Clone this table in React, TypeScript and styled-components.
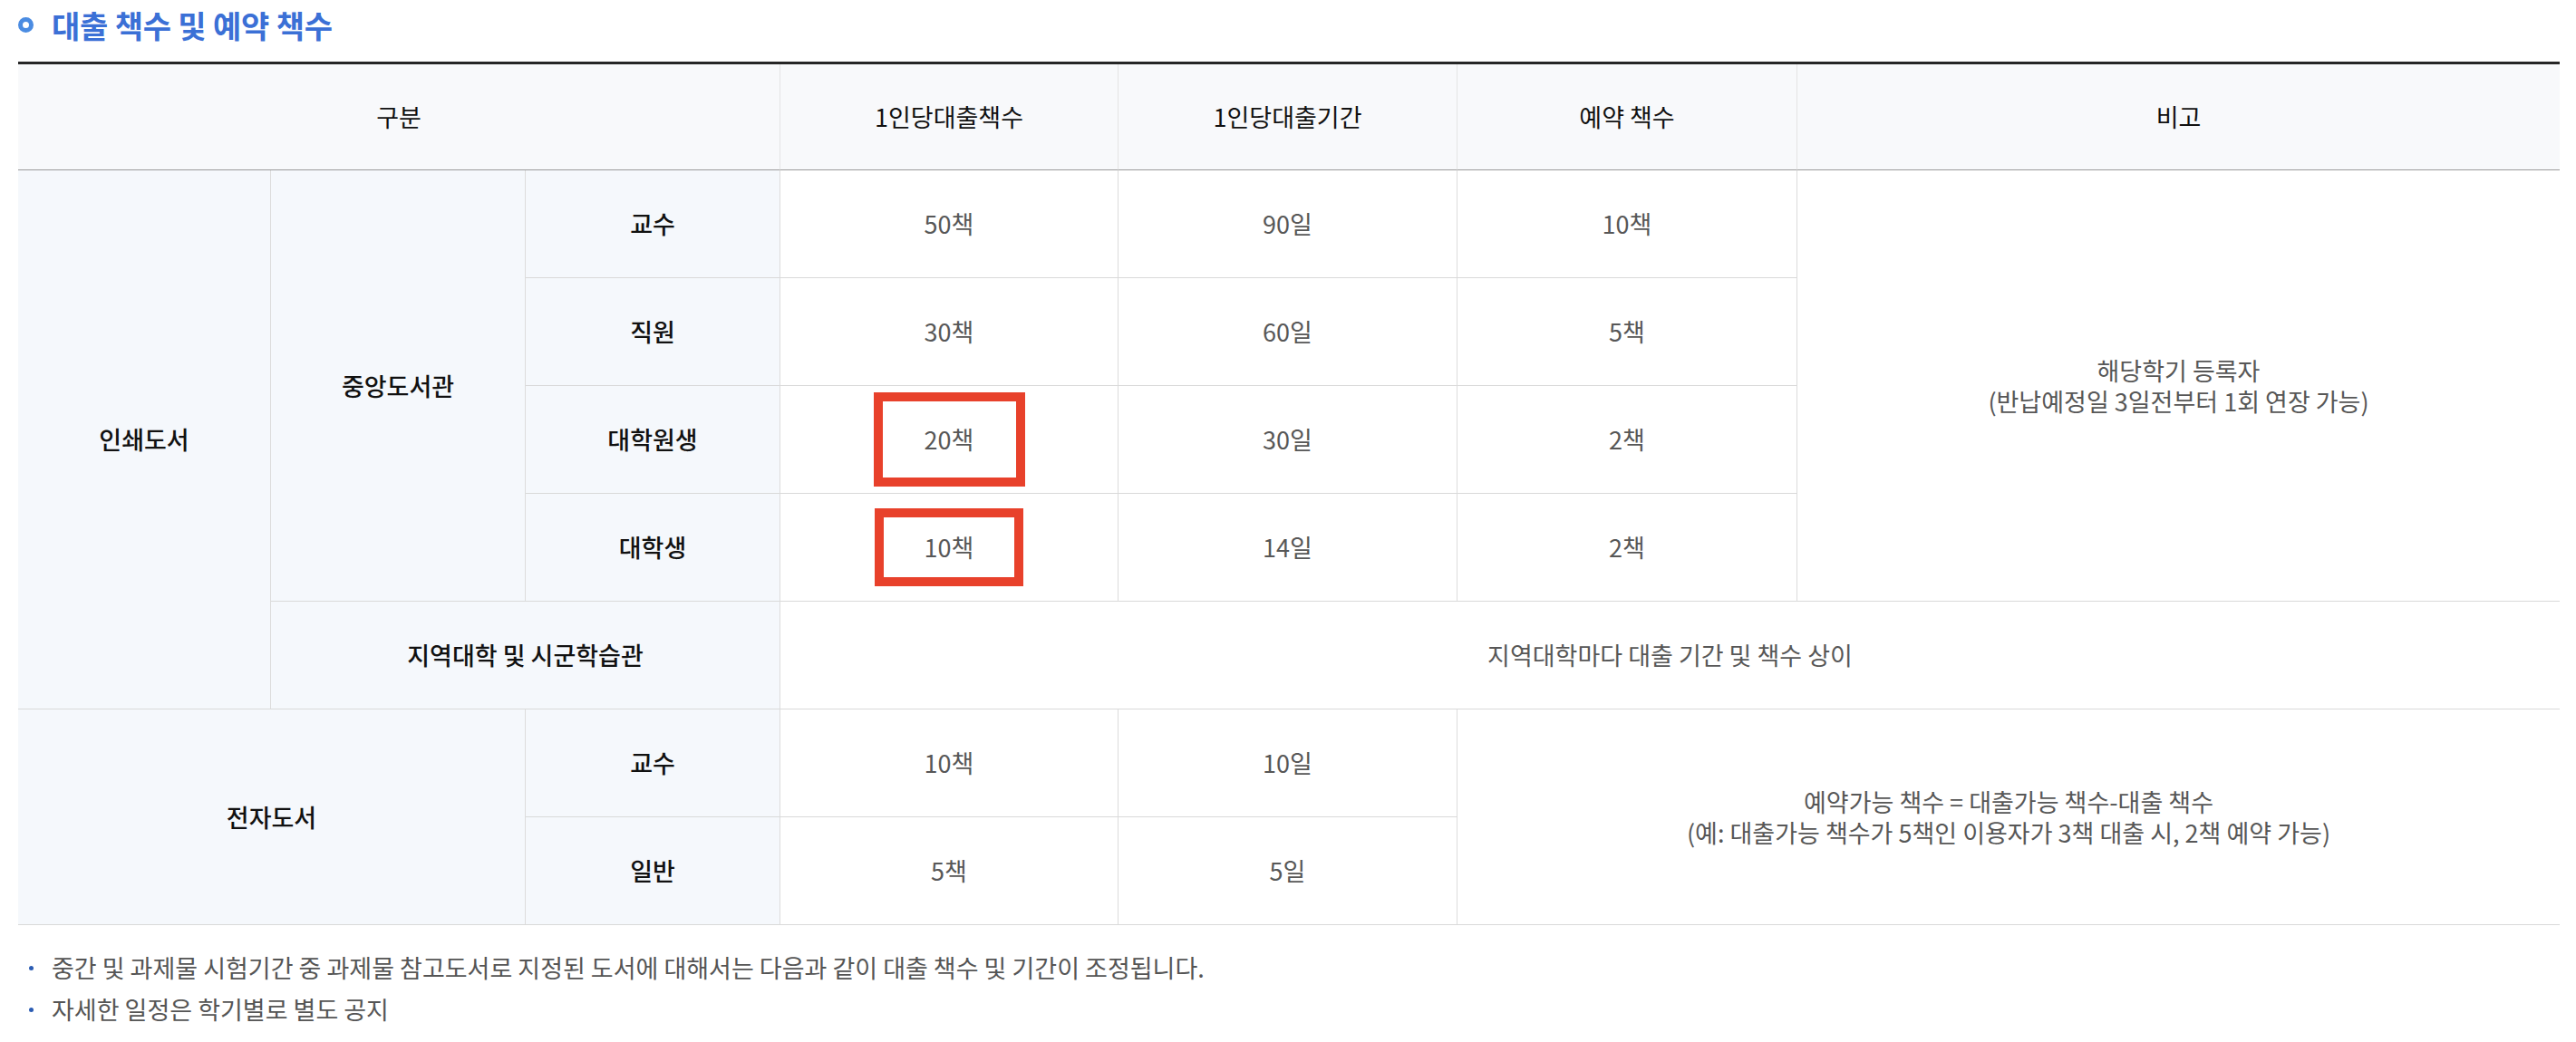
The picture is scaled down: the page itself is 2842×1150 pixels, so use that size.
import styled, { createGlobalStyle } from "styled-components";

const GlobalStyle = createGlobalStyle`
  body {
    margin: 0;
    background: #fff;
    font-family: "Noto Sans CJK KR", "Noto Sans", sans-serif;
  }
`

const Page = styled.div`
  padding: 0 18px 0 20px;
`

const Title = styled.h2`
  margin: 0;
  height: 55px;

  display: flex;
  flex-direction: row;
  align-items: center;
  gap: 20px;

  color: #3b70d6;
  font-size: 34px;
  font-weight: 700;
  letter-spacing: -0.2px;
`

const TitleRing = styled.span`
  width: 17px;
  height: 17px;
  box-sizing: border-box;
  border: 5px solid #4b8ce2;
  border-radius: 50%;
`

const Table = styled.table`
  margin-top: 13px;
  width: 100%;
  table-layout: fixed;
  border-collapse: separate;
  border-spacing: 0;
  border-top: 3px solid #262626;

  font-size: 27px;
  line-height: 34px;
  text-align: center;
`

const Col = styled.col<{ $w?: number }>`
  width: ${props => props.$w ? `${props.$w}px` : "auto"};
`

const HeadCell = styled.th<{ $last?: boolean }>`
  height: 116px;
  padding: 0;
  background: #f8f9fb;
  border-bottom: 1px solid #9a9a9a;
  border-right: ${props => props.$last ? "none" : "1px solid #e4e4e4"};

  color: #111;
  font-weight: 400;
`

const RowHead = styled.th`
  height: 118px;
  padding: 0;
  background: #f5f8fc;
  border-bottom: 1px solid #d9d9d9;
  border-right: 1px solid #dcdcdc;

  color: #111;
  font-weight: 500;
`

const Cell = styled.td<{ $last?: boolean }>`
  height: 118px;
  padding: 0;
  background: #fff;
  border-bottom: 1px solid #d9d9d9;
  border-right: ${props => props.$last ? "none" : "1px solid #dcdcdc"};

  color: #575757;
  font-weight: 400;
`

const Marked = styled.span<{ $w: number, $h: number }>`
  width: ${props => props.$w}px;
  height: ${props => props.$h}px;
  box-sizing: border-box;
  border: 10px solid #e8412b;

  display: inline-flex;
  align-items: center;
  justify-content: center;
  vertical-align: middle;
`

const Notes = styled.ul`
  margin: 24px 0 0;
  padding: 0;
  list-style: none;
`

const Note = styled.li`
  position: relative;
  padding-left: 37px;

  color: #555;
  font-size: 27px;
  line-height: 46px;

  &::before {
    content: "";
    position: absolute;
    left: 12px;
    top: 21px;
    width: 5px;
    height: 5px;
    border-radius: 50%;
    background: #2b5cb3;
  }
`

export default function App() {
  return <Page>
    <GlobalStyle />
    <Title><TitleRing />대출 책수 및 예약 책수</Title>
    <Table>
      <colgroup>
        <Col $w={279} />
        <Col $w={281} />
        <Col $w={281} />
        <Col $w={373} />
        <Col $w={374} />
        <Col $w={375} />
        <Col />
      </colgroup>
      <thead>
        <tr>
          <HeadCell colSpan={3}>구분</HeadCell>
          <HeadCell>1인당대출책수</HeadCell>
          <HeadCell>1인당대출기간</HeadCell>
          <HeadCell>예약 책수</HeadCell>
          <HeadCell $last>비고</HeadCell>
        </tr>
      </thead>
      <tbody>
        <tr>
          <RowHead rowSpan={5}>인쇄도서</RowHead>
          <RowHead rowSpan={4}>중앙도서관</RowHead>
          <RowHead>교수</RowHead>
          <Cell>50책</Cell>
          <Cell>90일</Cell>
          <Cell>10책</Cell>
          <Cell rowSpan={4} $last>해당학기 등록자<br />(반납예정일 3일전부터 1회 연장 가능)</Cell>
        </tr>
        <tr>
          <RowHead>직원</RowHead>
          <Cell>30책</Cell>
          <Cell>60일</Cell>
          <Cell>5책</Cell>
        </tr>
        <tr>
          <RowHead>대학원생</RowHead>
          <Cell><Marked $w={167} $h={104}>20책</Marked></Cell>
          <Cell>30일</Cell>
          <Cell>2책</Cell>
        </tr>
        <tr>
          <RowHead>대학생</RowHead>
          <Cell><Marked $w={164} $h={86}>10책</Marked></Cell>
          <Cell>14일</Cell>
          <Cell>2책</Cell>
        </tr>
        <tr>
          <RowHead colSpan={2}>지역대학 및 시군학습관</RowHead>
          <Cell colSpan={4} $last>지역대학마다 대출 기간 및 책수 상이</Cell>
        </tr>
        <tr>
          <RowHead rowSpan={2} colSpan={2}>전자도서</RowHead>
          <RowHead>교수</RowHead>
          <Cell>10책</Cell>
          <Cell>10일</Cell>
          <Cell rowSpan={2} colSpan={2} $last>
            예약가능 책수 = 대출가능 책수-대출 책수<br />
            (예: 대출가능 책수가 5책인 이용자가 3책 대출 시, 2책 예약 가능)
          </Cell>
        </tr>
        <tr>
          <RowHead>일반</RowHead>
          <Cell>5책</Cell>
          <Cell>5일</Cell>
        </tr>
      </tbody>
    </Table>
    <Notes>
      <Note>중간 및 과제물 시험기간 중 과제물 참고도서로 지정된 도서에 대해서는 다음과 같이 대출 책수 및 기간이 조정됩니다.</Note>
      <Note>자세한 일정은 학기별로 별도 공지</Note>
    </Notes>
  </Page>
}
